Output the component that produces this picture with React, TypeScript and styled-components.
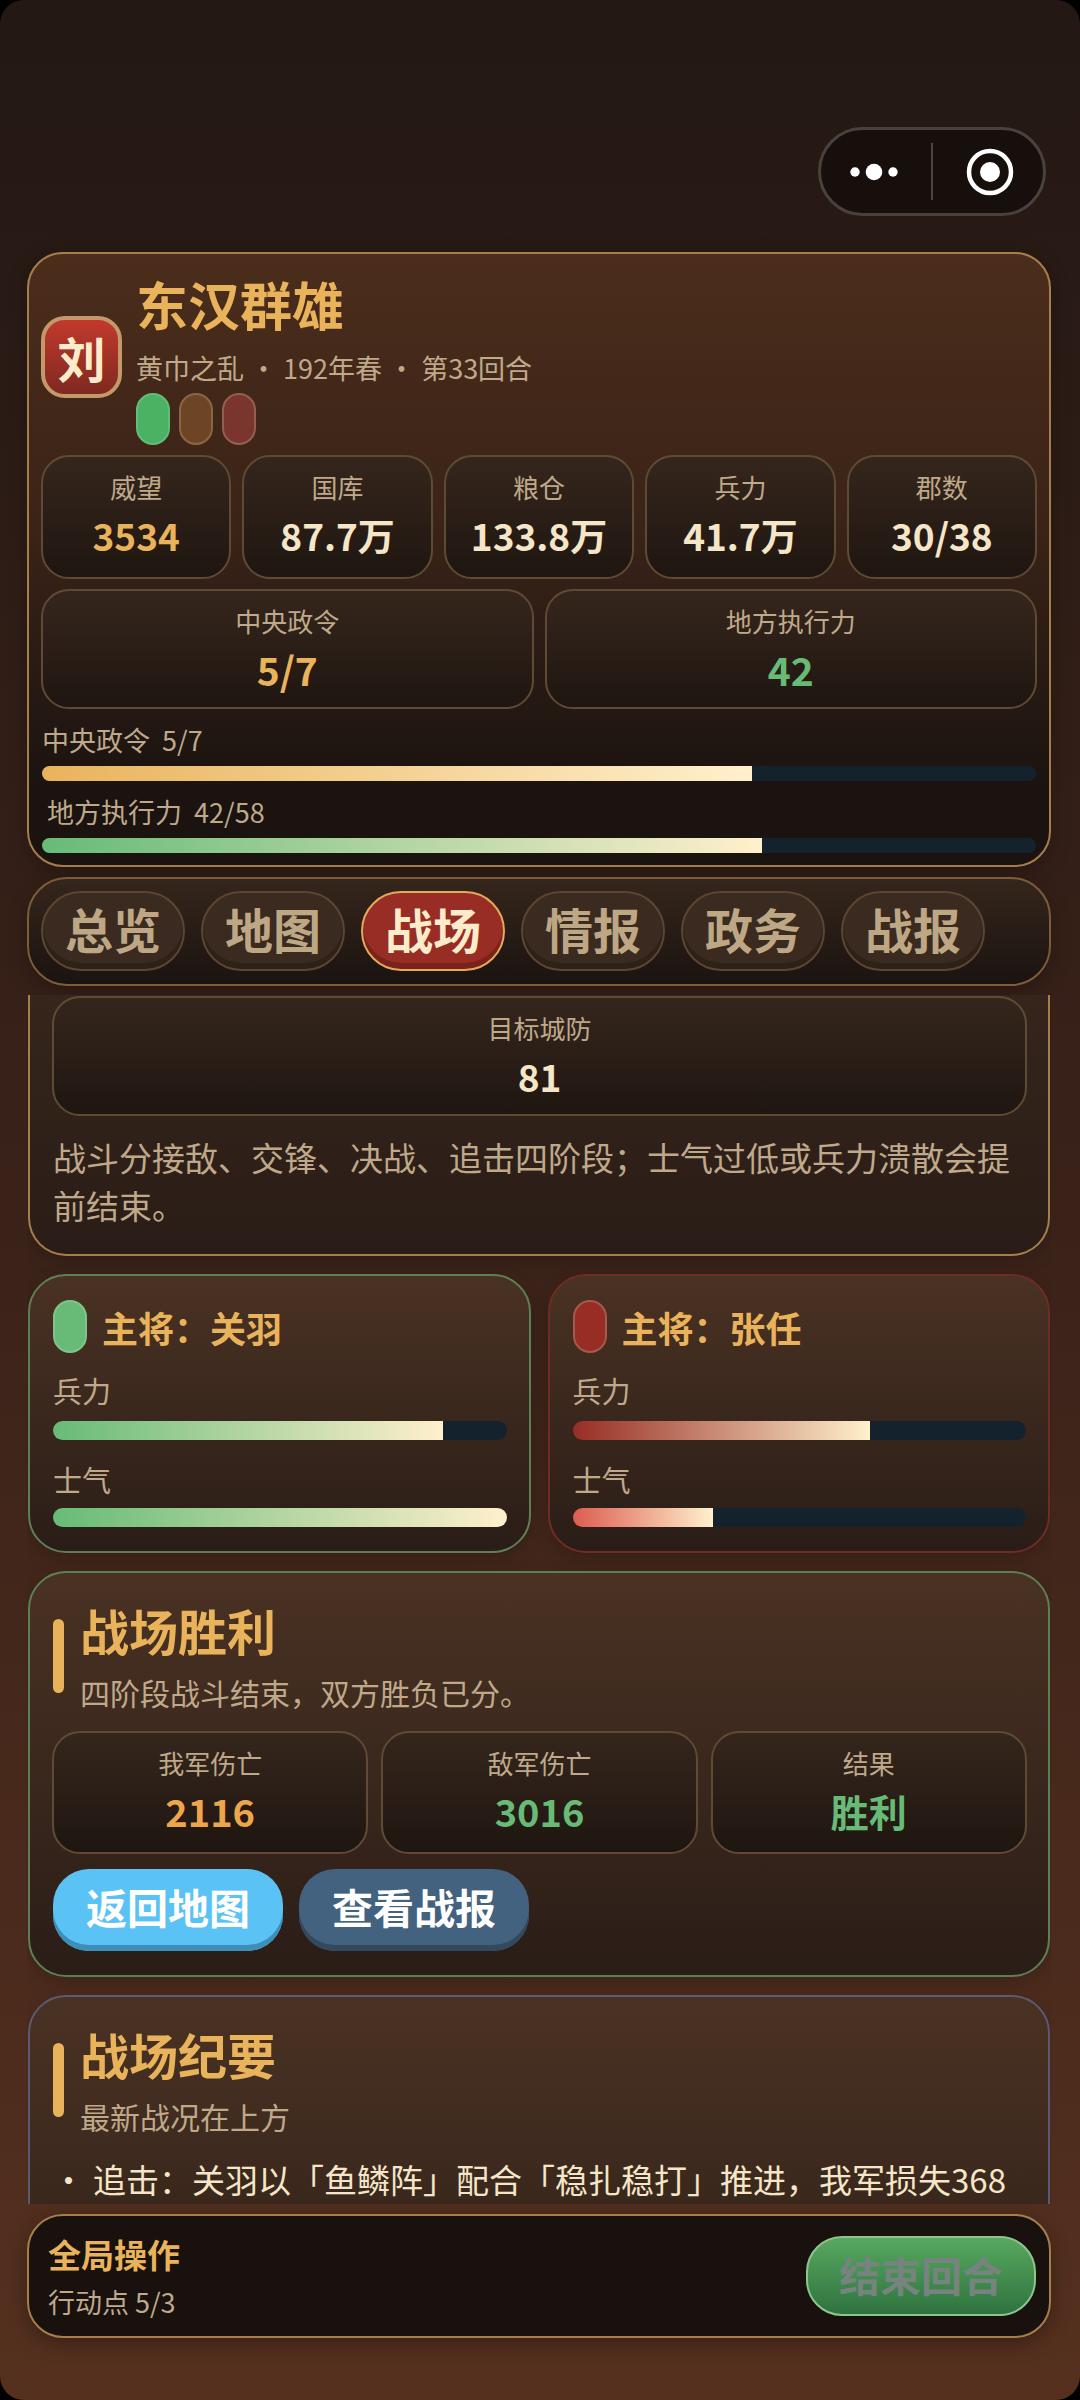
import React from "react";
import styled, {createGlobalStyle} from "styled-components";

const GlobalStyle = createGlobalStyle`
  html, body {
    margin: 0;
    padding: 0;
    background: #000;
  }
  * {
    box-sizing: border-box;
  }
`

const Page = styled.div`
  width: 1080px;
  height: 2400px;
  padding: 127px 29px 0 27px;
  display: flex;
  flex-direction: column;
  overflow: hidden;
  border-radius: 24px;
  background: linear-gradient(180deg, #231814 0%, #3a2219 50%, #55301f 100%);
  font-family: "Noto Sans CJK SC", "Noto Sans", sans-serif;
  color: #f5e6c8;
`

const Capsule = styled.div`
  align-self: flex-end;
  width: 228px;
  height: 89px;
  margin-right: 5px;
  margin-bottom: 36px;
  flex: none;
  border: 3px solid #4a413d;
  border-radius: 45px;
  background: #170f0c;
`

const TopCard = styled.section`
  flex: none;
  height: 615px;
  padding: 14px 12px 0;
  border: 2px solid #a67e4b;
  border-radius: 36px;
  background: linear-gradient(180deg, #4b2d1b 0%, #3a2318 45%, #1a1310 88%);
  box-shadow: 0 6px 20px rgba(0, 0, 0, 0.25);
`

const Header = styled.header`
  display: flex;
  align-items: center;
  gap: 14px;
`

const Logo = styled.div`
  width: 81px;
  height: 82px;
  flex: none;
  display: flex;
  align-items: center;
  justify-content: center;
  border: 4px solid #c3986a;
  border-radius: 24px;
  background: linear-gradient(180deg, #c2392c 0%, #7f2920 100%);
  color: #fdeccb;
  font-size: 48px;
  font-weight: 700;
`

const FactionTitle = styled.h1`
  margin: -3px 0 0;
  font-size: 52px;
  line-height: 78px;
  font-weight: 700;
  color: #e9b35c;
`

const FactionSub = styled.div`
  margin-top: 5px;
  font-size: 27px;
  line-height: 39px;
  color: #bfa98a;
`

const Pills = styled.div`
  display: flex;
  gap: 9px;
  margin-top: 6px;
`

const Pill = styled.span<{$bg: string, $edge: string}>`
  width: 34px;
  height: 52px;
  border-radius: 17px;
  border: 2px solid ${props => props.$edge};
  background: ${props => props.$bg};
`

const Stats = styled.div<{$cols: number, $wide?: boolean}>`
  margin-top: ${props => props.$wide ? 17 : 10}px;
  display: grid;
  grid-template-columns: repeat(${props => props.$cols}, 1fr);
  gap: ${props => props.$wide ? 13 : 11}px;
`

const Stat = styled.div<{$height: number}>`
  height: ${props => props.$height}px;
  padding-top: 10px;
  border: 2px solid #5f4a33;
  border-radius: 28px;
  background: linear-gradient(180deg, #35261c 0%, #1f1611 100%);
  text-align: center;
`

const StatLabel = styled.div`
  font-size: 26px;
  line-height: 39px;
  color: #bfa98a;
`

const StatValue = styled.div<{$color?: string, $size?: number}>`
  margin-top: 3px;
  font-size: ${props => props.$size ?? 37}px;
  line-height: 52px;
  font-weight: 700;
  color: ${props => props.$color ?? "#f5e6c8"};
`

const BarLabel = styled.div<{$indent?: number, $top: number}>`
  margin-top: ${props => props.$top}px;
  padding-left: ${props => props.$indent ?? 1}px;
  font-size: 27px;
  line-height: 40px;
  white-space: pre;
  color: #bfa98a;
`

const Track = styled.div<{$height: number, $top: number}>`
  height: ${props => props.$height}px;
  margin-top: ${props => props.$top}px;
  border-radius: ${props => props.$height / 2}px;
  overflow: hidden;
  background: #14222e;
`

const WideTrack = styled(Track)`
  margin-left: 1px;
  margin-right: 1px;
`

const Fill = styled.div<{$from: string}>`
  height: 100%;
  background: linear-gradient(90deg, ${props => props.$from} 0%, #fff0cc 100%);
`

const TabBar = styled.nav`
  flex: none;
  height: 109px;
  margin-top: 10px;
  padding: 12px 12px 0;
  display: flex;
  gap: 16px;
  border: 2px solid #7d5c38;
  border-radius: 40px;
  background: linear-gradient(180deg, #35261c 0%, #1a1310 100%);
  box-shadow: 0 6px 20px rgba(0, 0, 0, 0.25);
`

const Tab = styled.div<{$active?: boolean}>`
  width: 144px;
  height: 80px;
  display: flex;
  align-items: center;
  justify-content: center;
  padding-bottom: 6px;
  border: 2px solid ${props => props.$active ? "#e6a95a" : "#5b4631"};
  border-radius: 40px;
  font-size: 48px;
  font-weight: 700;
  color: ${props => props.$active ? "#fdeccb" : "#bda785"};
  background: ${props => props.$active ? "#972d24" : "#3a2a1f"};
  box-shadow: inset 0 -6px 0 ${props => props.$active ? "#7a231c" : "#2e2118"};
`

const Scroller = styled.main`
  flex: none;
  height: 1209px;
  margin-top: 9px;
  padding: 0 1px;
  display: flex;
  flex-direction: column;
  gap: 18px;
  overflow: hidden;
`

const Card = styled.section<{$edge?: string, $height: number}>`
  flex: none;
  height: ${props => props.$height}px;
  padding: 26px 21px 0 22px;
  border: 2px solid ${props => props.$edge ?? "#a67e4b"};
  border-radius: 38px;
  background: linear-gradient(180deg, #4a3223 0%, #2a1d17 100%);
  box-shadow: 0 6px 18px rgba(0, 0, 0, 0.18);
`

// the card the page is scrolled past: only its lower part is still visible
const ScrolledCard = styled(Card)`
  padding-top: 1px;
  border-top: none;
  border-top-left-radius: 0;
  border-top-right-radius: 0;
  background: linear-gradient(180deg, #35251b 0%, #2a1d17 100%);
`

const Note = styled.p`
  margin: 17px 0 0 1px;
  font-size: 33px;
  line-height: 48px;
  color: #bfa98a;
`

const Generals = styled.div`
  flex: none;
  display: grid;
  grid-template-columns: 1fr 1fr;
  gap: 17px;
`

const GeneralCard = styled(Card)`
  padding: 24px 22px 0 23px;
`

const GeneralHead = styled.div`
  display: flex;
  align-items: center;
  gap: 15px;
  height: 53px;
`

const GeneralPill = styled.span<{$bg: string, $edge: string}>`
  width: 34px;
  height: 53px;
  border-radius: 17px;
  border: 2px solid ${props => props.$edge};
  background: ${props => props.$bg};
`

const GeneralName = styled.div`
  font-size: 36px;
  line-height: 54px;
  font-weight: 700;
  color: #e9b35c;
`

const GaugeLabel = styled.div<{$top: number}>`
  margin-top: ${props => props.$top}px;
  font-size: 29px;
  line-height: 44px;
  color: #bfa98a;
`

const SectionHead = styled.div`
  display: flex;
  gap: 16px;
  margin-left: 1px;
`

const Accent = styled.span`
  width: 11px;
  height: 74px;
  margin-top: 20px;
  flex: none;
  border-radius: 6px;
  background: #e9b35c;
`

const SectionTitle = styled.h2`
  margin: -5px 0 0;
  font-size: 49px;
  line-height: 72px;
  font-weight: 700;
  color: #e9b35c;
`

const SectionSub = styled.div`
  margin-top: 4px;
  font-size: 30px;
  line-height: 44px;
  color: #bfa98a;
`

const Actions = styled.div`
  display: flex;
  gap: 16px;
  margin: 15px 0 0 1px;
`

const ActionButton = styled.button<{$bg: string, $under: string}>`
  width: 230px;
  height: 82px;
  padding: 0 0 8px;
  border: none;
  border-radius: 36px;
  font-family: inherit;
  font-size: 41px;
  font-weight: 700;
  color: #fff;
  background: ${props => props.$bg};
  box-shadow: inset 0 -6px 0 ${props => props.$under};
`

const LogLine = styled.div`
  display: flex;
  gap: 8px;
  margin-top: 19px;
  font-size: 33px;
  line-height: 44px;
  white-space: nowrap;
  color: #f5e6c8;
`

const BottomBar = styled.footer`
  flex: none;
  height: 124px;
  margin-top: 10px;
  padding: 0 13px 0 19px;
  display: flex;
  align-items: center;
  justify-content: space-between;
  border: 2px solid #a67e4b;
  border-radius: 36px;
  background: #18110e;
  box-shadow: 0 6px 20px rgba(0, 0, 0, 0.3);
`

const BarTitle = styled.div`
  margin-top: -2px;
  font-size: 33px;
  line-height: 50px;
  font-weight: 700;
  color: #e9b35c;
`

const BarSub = styled.div`
  margin-top: 3px;
  font-size: 27px;
  line-height: 40px;
  color: #bfa98a;
`

const EndTurn = styled.button`
  width: 230px;
  height: 80px;
  padding: 0 0 5px;
  border: 2px solid #8fc48f;
  border-radius: 36px;
  font-family: inherit;
  font-size: 41px;
  font-weight: 700;
  color: #77837f;
  background: linear-gradient(180deg, #58a85f 0%, #2f7340 100%);
`

const CapsuleIcons = () => (
  <svg width="222" height="83" viewBox="0 0 222 83">
    <circle cx="34" cy="42" r="4.7" fill="#fff" />
    <circle cx="53" cy="42" r="8.3" fill="#fff" />
    <circle cx="72" cy="42" r="4.7" fill="#fff" />
    <rect x="110" y="13" width="2" height="57" fill="#4e4540" />
    <circle cx="169" cy="42" r="21" fill="none" stroke="#fff" strokeWidth="4.5" />
    <circle cx="169" cy="42" r="10" fill="#fff" />
  </svg>
)

const Gauge = (props: {label: string, pct: number, from: string, second?: boolean}) => (
  <>
    <GaugeLabel $top={props.second ? 17 : 15}>{props.label}</GaugeLabel>
    <Track $height={19} $top={props.second ? 7 : 9}>
      <Fill $from={props.from} style={{width: `${props.pct}%`}} />
    </Track>
  </>
)

const tabs = ["总览", "地图", "战场", "情报", "政务", "战报"]

const App = () => {
  return (
    <Page>
      <GlobalStyle />
      <Capsule><CapsuleIcons /></Capsule>

      <TopCard>
        <Header>
          <Logo>刘</Logo>
          <div>
            <FactionTitle>东汉群雄</FactionTitle>
            <FactionSub>黄巾之乱 · 192年春 · 第33回合</FactionSub>
            <Pills>
              <Pill $bg="#4cb263" $edge="#62bd78" />
              <Pill $bg="#6d4524" $edge="#8a6644" />
              <Pill $bg="#7a362e" $edge="#936050" />
            </Pills>
          </div>
        </Header>
        <Stats $cols={5}>
          <Stat $height={124}><StatLabel>威望</StatLabel><StatValue $color="#e9b35c">3534</StatValue></Stat>
          <Stat $height={124}><StatLabel>国库</StatLabel><StatValue>87.7万</StatValue></Stat>
          <Stat $height={124}><StatLabel>粮仓</StatLabel><StatValue>133.8万</StatValue></Stat>
          <Stat $height={124}><StatLabel>兵力</StatLabel><StatValue>41.7万</StatValue></Stat>
          <Stat $height={124}><StatLabel>郡数</StatLabel><StatValue>30/38</StatValue></Stat>
        </Stats>
        <Stats $cols={2}>
          <Stat $height={120}><StatLabel>中央政令</StatLabel><StatValue $color="#e9b35c" $size={39}>5/7</StatValue></Stat>
          <Stat $height={120}><StatLabel>地方执行力</StatLabel><StatValue $color="#67bb77" $size={39}>42</StatValue></Stat>
        </Stats>
        <BarLabel $top={11}>中央政令  5/7</BarLabel>
        <WideTrack $height={15} $top={6}>
          <Fill $from="#e9b35c" style={{width: "71.4%"}} />
        </WideTrack>
        <BarLabel $top={11} $indent={6}>地方执行力  42/58</BarLabel>
        <WideTrack $height={15} $top={6}>
          <Fill $from="#67bb77" style={{width: "72.4%"}} />
        </WideTrack>
      </TopCard>

      <TabBar>
        {tabs.map(tab => <Tab key={tab} $active={tab === "战场"}>{tab}</Tab>)}
      </TabBar>

      <Scroller>
        <ScrolledCard $height={261}>
          <Stat $height={120}>
            <StatLabel>目标城防</StatLabel>
            <StatValue>81</StatValue>
          </Stat>
          <Note>战斗分接敌、交锋、决战、追击四阶段；士气过低或兵力溃散会提前结束。</Note>
        </ScrolledCard>

        <Generals>
          <GeneralCard $edge="#5e7f53" $height={279}>
            <GeneralHead>
              <GeneralPill $bg="#67bb77" $edge="#7fc48c" />
              <GeneralName>主将：关羽</GeneralName>
            </GeneralHead>
            <Gauge label="兵力" pct={86} from="#67bb77" />
            <Gauge label="士气" pct={100} from="#67bb77" second />
          </GeneralCard>
          <GeneralCard $edge="#6f2c24" $height={279}>
            <GeneralHead>
              <GeneralPill $bg="#972d24" $edge="#a65a4a" />
              <GeneralName>主将：张任</GeneralName>
            </GeneralHead>
            <Gauge label="兵力" pct={65.5} from="#972d24" />
            <Gauge label="士气" pct={31} from="#dd5c50" second />
          </GeneralCard>
        </Generals>

        <Card $edge="#5e7f53" $height={406}>
          <SectionHead>
            <Accent />
            <div>
              <SectionTitle>战场胜利</SectionTitle>
              <SectionSub>四阶段战斗结束，双方胜负已分。</SectionSub>
            </div>
          </SectionHead>
          <Stats $cols={3} $wide>
            <Stat $height={123}><StatLabel>我军伤亡</StatLabel><StatValue $color="#eda64c" $size={38}>2116</StatValue></Stat>
            <Stat $height={123}><StatLabel>敌军伤亡</StatLabel><StatValue $color="#67bb77" $size={38}>3016</StatValue></Stat>
            <Stat $height={123}><StatLabel>结果</StatLabel><StatValue $color="#67bb77" $size={38}>胜利</StatValue></Stat>
          </Stats>
          <Actions>
            <ActionButton $bg="#5bc2f6" $under="#3d8eb8">返回地图</ActionButton>
            <ActionButton $bg="#43627f" $under="#34495e">查看战报</ActionButton>
          </Actions>
        </Card>

        <Card $edge="#5a5a72" $height={420}>
          <SectionHead>
            <Accent />
            <div>
              <SectionTitle>战场纪要</SectionTitle>
              <SectionSub>最新战况在上方</SectionSub>
            </div>
          </SectionHead>
          <LogLine><span>·</span><span>追击：关羽以「鱼鳞阵」配合「稳扎稳打」推进，我军损失368</span></LogLine>
        </Card>
      </Scroller>

      <BottomBar>
        <div>
          <BarTitle>全局操作</BarTitle>
          <BarSub>行动点 5/3</BarSub>
        </div>
        <EndTurn>结束回合</EndTurn>
      </BottomBar>
    </Page>
  )
}

export default App
